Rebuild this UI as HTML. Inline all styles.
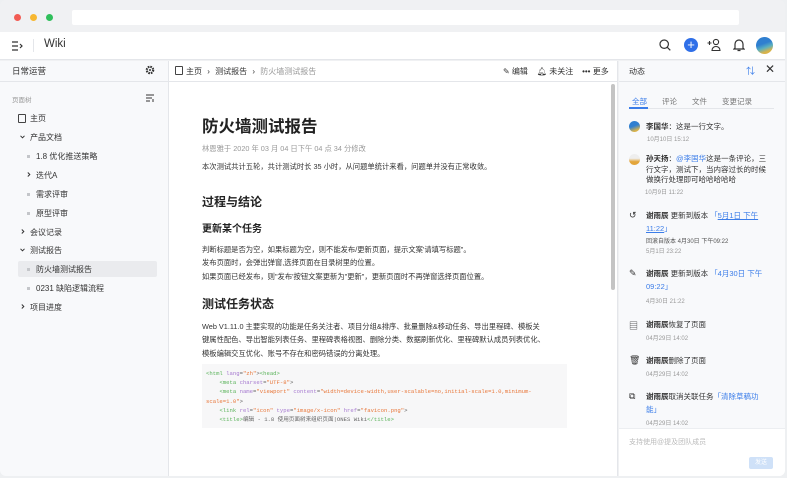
<!DOCTYPE html>
<html><head><meta charset="utf-8"><style>
*{margin:0;padding:0;box-sizing:border-box}
body{width:787px;height:478px;overflow:hidden;background:#eef0f2;font-family:"Liberation Sans","Noto Sans CJK SC",sans-serif;color:#333;position:relative}
.a{position:absolute;white-space:nowrap}
.win{position:absolute;left:0;top:0;width:785px;height:476px;background:#f0f1f3;border-radius:6px;overflow:hidden}
.dot{position:absolute;top:14px;width:7px;height:7px;border-radius:50%}
.s{font-size:8px;color:#333}
.g{color:#999}
.b{color:#3b7de9}
.bu{position:absolute;width:3px;height:3px;background:#c4c6ca}
svg{position:absolute}
</style></head><body>
<div class="win">
<div class="dot" style="left:14px;background:#f25c54"></div>
<div class="dot" style="left:30px;background:#f7b731"></div>
<div class="dot" style="left:46px;background:#2fbf5b"></div>
<div class="a" style="left:72px;top:10px;width:667px;height:15px;background:#fff;border-radius:2px"></div>
<!-- top nav -->
<div class="a" style="left:0;top:32px;width:785px;height:28px;background:#fff;border-bottom:1px solid #e4e6ea"></div>
<svg style="left:11px;top:41px" width="12" height="10" viewBox="0 0 12 10" fill="none" stroke="#333" stroke-width="1.2"><path d="M1 1h6M1 5h6M1 9h6M9 3l2 2-2 2"/></svg>
<div class="a" style="left:33px;top:39px;width:1px;height:13px;background:#e4e6ea"></div>
<div class="a" style="left:44px;top:38px;font-size:11.5px;color:#333">Wiki</div>
<svg style="left:659px;top:39px" width="12" height="12" viewBox="0 0 12 12" fill="none" stroke="#333" stroke-width="1.2"><circle cx="5.2" cy="5.2" r="4.2"/><path d="M8.3 8.3l3 3"/></svg>
<div class="a" style="left:684px;top:38px;width:14px;height:14px;border-radius:50%;background:#2f6fe8;color:#fff;font-size:13px;line-height:13px;text-align:center">+</div>
<svg style="left:707px;top:38px" width="14" height="13" viewBox="0 0 14 13" fill="none" stroke="#333" stroke-width="1.1"><path d="M0.5 5h4M2.5 3v4"/><circle cx="9" cy="4" r="2.6"/><path d="M5 12.5c0-2.5 1.8-4 4-4s4 1.5 4 4z"/></svg>
<svg style="left:733px;top:38px" width="12" height="14" viewBox="0 0 12 14" fill="none" stroke="#333" stroke-width="1.2"><path d="M2 10V6a4 4 0 018 0v4l1 1H1z M4.5 12.5h3"/></svg>
<div class="a" style="left:756px;top:37px;width:17px;height:17px;border-radius:50%;background:linear-gradient(160deg,#2f7fd0 40%,#5ab0c0 60%,#d9b34a 80%)"></div>
<!-- sidebar -->
<div class="a" style="left:0;top:61px;width:169px;height:415px;background:#f8f9fb;border-right:1px solid #e4e6ea"></div>
<div class="a" style="left:0;top:61px;width:169px;height:21px;border-bottom:1px solid #e4e6ea"></div>
<div class="a s" style="left:12px;top:65px;font-size:8.5px">日常运营</div>
<svg style="left:145px;top:65px" width="10" height="10" viewBox="0 0 10 10"><circle cx="5" cy="5" r="3.2" fill="none" stroke="#333" stroke-width="2.2" stroke-dasharray="1.6 0.9"/><circle cx="5" cy="5" r="1" fill="#333"/></svg>
<div class="a g" style="left:12px;top:94px;font-size:6.5px">页面树</div>
<svg style="left:146px;top:94px" width="9" height="8" viewBox="0 0 9 8" fill="none" stroke="#333" stroke-width="1"><path d="M0 1h8M0 4h6M0 7h4M7 5v3"/></svg>
<div class="a" style="left:18px;top:114px;width:8px;height:9px;border:1.2px solid #444;border-radius:1px"></div>
<div class="a s" style="left:30px;top:113px">主页</div>
<svg style="left:20px;top:135px" width="5" height="4" viewBox="0 0 5 4" fill="none" stroke="#333" stroke-width="1"><path d="M0.5 0.8l2 2 2-2"/></svg>
<div class="a s" style="left:30px;top:132px">产品文档</div>
<div class="bu" style="left:27px;top:155px"></div><div class="a s" style="left:36px;top:151px">1.8 优化推送策略</div>
<svg style="left:27px;top:172px" width="4" height="5" viewBox="0 0 4 5" fill="none" stroke="#333" stroke-width="1"><path d="M0.8 0.5l2 2-2 2"/></svg><div class="a s" style="left:36px;top:170px">迭代A</div>
<div class="bu" style="left:27px;top:193px"></div><div class="a s" style="left:36px;top:189px">需求评审</div>
<div class="bu" style="left:27px;top:212px"></div><div class="a s" style="left:36px;top:208px">原型评审</div>
<svg style="left:21px;top:229px" width="4" height="5" viewBox="0 0 4 5" fill="none" stroke="#333" stroke-width="1"><path d="M0.8 0.5l2 2-2 2"/></svg><div class="a s" style="left:30px;top:227px">会议记录</div>
<svg style="left:20px;top:248px" width="5" height="4" viewBox="0 0 5 4" fill="none" stroke="#333" stroke-width="1"><path d="M0.5 0.8l2 2 2-2"/></svg><div class="a s" style="left:30px;top:245px">测试报告</div>
<div class="a" style="left:18px;top:261px;width:139px;height:16px;background:#eaebee;border-radius:2px"></div>
<div class="bu" style="left:27px;top:268px"></div><div class="a s" style="left:36px;top:264px">防火墙测试报告</div>
<div class="bu" style="left:27px;top:287px"></div><div class="a s" style="left:36px;top:283px">0231 缺陷逻辑流程</div>
<svg style="left:21px;top:304px" width="4" height="5" viewBox="0 0 4 5" fill="none" stroke="#333" stroke-width="1"><path d="M0.8 0.5l2 2-2 2"/></svg><div class="a s" style="left:30px;top:302px">项目进度</div>
<!-- content -->
<div class="a" style="left:169px;top:61px;width:449px;height:415px;background:#fff;border-right:1px solid #e4e6ea"></div>
<div class="a" style="left:169px;top:61px;width:449px;height:21px;border-bottom:1px solid #e4e6ea"></div>
<div class="a" style="left:175px;top:66px;width:8px;height:9px;border:1.2px solid #444;border-radius:1px"></div>
<div class="a s" style="left:186px;top:66px">主页 <span style="margin:0 3px">›</span> 测试报告 <span style="margin:0 3px">›</span> <span class="g">防火墙测试报告</span></div>
<div class="a s" style="left:503px;top:66px">✎ 编辑 &nbsp;&nbsp; 🔔︎ 未关注 &nbsp;&nbsp; ••• 更多</div>
<div class="a" style="left:611px;top:84px;width:4px;height:206px;background:#c4c4c4;border-radius:2px"></div>
<div class="a" style="left:202px;top:113px;font-size:16.5px;font-weight:bold;color:#222">防火墙测试报告</div>
<div class="a g" style="left:202px;top:144px;font-size:7.3px">林恩雅于 2020 年 03 月 04 日下午 04 点 34 分修改</div>
<div class="a s" style="left:202px;top:162px;font-size:7.3px">本次测试共计五轮，共计测试时长 35 小时，从问题单统计来看，问题单并没有正常收敛。</div>
<div class="a" style="left:202px;top:193px;font-size:12px;font-weight:bold;color:#222">过程与结论</div>
<div class="a" style="left:202px;top:220px;font-size:10px;font-weight:bold;color:#222">更新某个任务</div>
<div class="a s" style="left:202px;top:243px;font-size:7.3px;line-height:13.3px">判断标题是否为空，如果标题为空，则不能发布/更新页面，提示文案'请填写标题"。<br>发布页面时，会弹出弹窗,选择页面在目录树里的位置。<br>如果页面已经发布，则"发布'按钮文案更新为"更新"，更新页面时不再弹窗选择页面位置。</div>
<div class="a" style="left:202px;top:295px;font-size:12px;font-weight:bold;color:#222">测试任务状态</div>
<div class="a s" style="left:202px;top:320px;font-size:7.3px;line-height:13.3px">Web V1.11.0 主要实现的功能是任务关注者、项目分组&amp;排序、批量删除&amp;移动任务、导出里程碑、模板关<br>键属性配色、导出智能列表任务、里程碑表格视图、删除分类、数据刷新优化、里程碑默认成员列表优化、<br>模板编辑交互优化、账号不存在和密码错误的分离处理。</div>
<div class="a" style="left:202px;top:364px;width:365px;height:64px;background:#f7f7f8"></div>
<div class="a" style="left:206px;top:369px;font-family:'Liberation Mono',monospace;font-size:5.6px;line-height:9.2px;color:#666">
<span style="color:#5bb35b">&lt;html</span> <span style="color:#a77bd0">lang</span>=<span style="color:#e8773a">"zh"</span>&gt;<span style="color:#5bb35b">&lt;head&gt;</span><br>
&nbsp;&nbsp;&nbsp;&nbsp;<span style="color:#5bb35b">&lt;meta</span> <span style="color:#a77bd0">charset</span>=<span style="color:#e8773a">"UTF-8"</span>&gt;<br>
&nbsp;&nbsp;&nbsp;&nbsp;<span style="color:#5bb35b">&lt;meta</span> <span style="color:#a77bd0">name</span>=<span style="color:#e8773a">"viewport"</span> <span style="color:#a77bd0">content</span>=<span style="color:#e8773a">"width=device-width,user-scalable=no,initial-scale=1.0,minimum-</span><br>
<span style="color:#e8773a">scale=1.0"</span>&gt;<br>
&nbsp;&nbsp;&nbsp;&nbsp;<span style="color:#5bb35b">&lt;link</span> <span style="color:#a77bd0">rel</span>=<span style="color:#e8773a">"icon"</span> <span style="color:#a77bd0">type</span>=<span style="color:#e8773a">"image/x-icon"</span> <span style="color:#a77bd0">href</span>=<span style="color:#e8773a">"favicon.png"</span>&gt;<br>
&nbsp;&nbsp;&nbsp;&nbsp;<span style="color:#5bb35b">&lt;title&gt;</span>编辑 - 1.8 使用页面树来组织页面|ONES Wiki<span style="color:#5bb35b">&lt;/title&gt;</span></div>
<!-- right panel -->
<div class="a" style="left:619px;top:61px;width:166px;height:415px;background:#f8f9fb"></div>
<div class="a" style="left:619px;top:61px;width:166px;height:21px;border-bottom:1px solid #e4e6ea"></div>
<div class="a s" style="left:629px;top:66px">动态</div>
<div class="a b" style="left:746px;top:64px;font-size:9px">⇅</div>
<div class="a" style="left:765px;top:62px;font-size:12px;color:#333">✕</div>
<div class="a" style="left:629px;top:108px;width:145px;height:1px;background:#e4e6ea"></div>
<div class="a b" style="left:632px;top:96px;font-size:7.5px">全部</div>
<div class="a" style="left:629px;top:107px;width:19px;height:2px;background:#3b7de9"></div>
<div class="a" style="left:662px;top:96px;font-size:7.5px;color:#777">评论</div>
<div class="a" style="left:692px;top:96px;font-size:7.5px;color:#777">文件</div>
<div class="a" style="left:722px;top:96px;font-size:7.5px;color:#777">变更记录</div>
<div class="a" style="left:629px;top:121px;width:11px;height:11px;border-radius:50%;background:linear-gradient(160deg,#2f7fd0 45%,#d9b34a 80%)"></div>
<div class="a s" style="left:646px;top:121px;font-size:7.5px"><b>李国华</b>：这是一行文字。</div>
<div class="a g" style="left:647px;top:134px;font-size:6px">10月10日 15:12</div>
<div class="a" style="left:629px;top:154px;width:11px;height:11px;border-radius:50%;background:linear-gradient(180deg,#eee 40%,#e3a53a 70%)"></div>
<div class="a s" style="left:646px;top:154px;font-size:7.5px;line-height:10.5px"><b>孙天扬</b>：<span class="b">@李国华</span>这是一条评论，三<br>行文字，测试下，当内容过长的时候<br>做换行处理即可哈哈哈哈哈</div>
<div class="a g" style="left:645px;top:187px;font-size:6px">10月9日 11:22</div>
<div class="a s" style="left:629px;top:210px;font-size:9px">↺</div>
<div class="a s" style="left:646px;top:210px;font-size:7.5px;line-height:12.5px"><b>谢雨辰</b> 更新到版本 <span class="b">「<u>5月1日 下午</u></span><br><span class="b"><u>11:22</u>」</span></div>
<div class="a s" style="left:646px;top:236px;font-size:6px;color:#555">回滚自版本 4月30日 下午09:22</div>
<div class="a g" style="left:646px;top:246px;font-size:6px">5月1日 23:22</div>
<div class="a s" style="left:629px;top:268px;font-size:9px">✎</div>
<div class="a s" style="left:646px;top:268px;font-size:7.5px;line-height:12.5px"><b>谢雨辰</b> 更新到版本 <span class="b">「4月30日 下午</span><br><span class="b">09:22」</span></div>
<div class="a g" style="left:646px;top:296px;font-size:6px">4月30日 21:22</div>
<div class="a s" style="left:629px;top:319px;font-size:9px">▤</div>
<div class="a s" style="left:646px;top:319px;font-size:7.5px"><b>谢雨辰</b>恢复了页面</div>
<div class="a g" style="left:646px;top:333px;font-size:6px">04月29日 14:02</div>
<div class="a s" style="left:629px;top:355px;font-size:9px">🗑︎</div>
<div class="a s" style="left:646px;top:355px;font-size:7.5px"><b>谢雨辰</b>删除了页面</div>
<div class="a g" style="left:646px;top:369px;font-size:6px">04月29日 14:02</div>
<div class="a s" style="left:629px;top:391px;font-size:9px">⧉</div>
<div class="a s" style="left:646px;top:391px;font-size:7.5px;line-height:12.5px"><b>谢雨辰</b>取消关联任务<span class="b">「清除草稿功</span><br><span class="b">能」</span></div>
<div class="a g" style="left:646px;top:418px;font-size:6px">04月29日 14:02</div>
<div class="a" style="left:619px;top:428px;width:166px;height:48px;background:#fff;border-top:1px solid #eceef1"></div>
<div class="a" style="left:629px;top:437px;font-size:7px;color:#bbb">支持使用@提及团队成员</div>
<div class="a" style="left:749px;top:457px;width:24px;height:12px;background:#cfe1f8;color:#fff;font-size:6px;line-height:12px;text-align:center;border-radius:2px">发送</div>
</div>
</body></html>
